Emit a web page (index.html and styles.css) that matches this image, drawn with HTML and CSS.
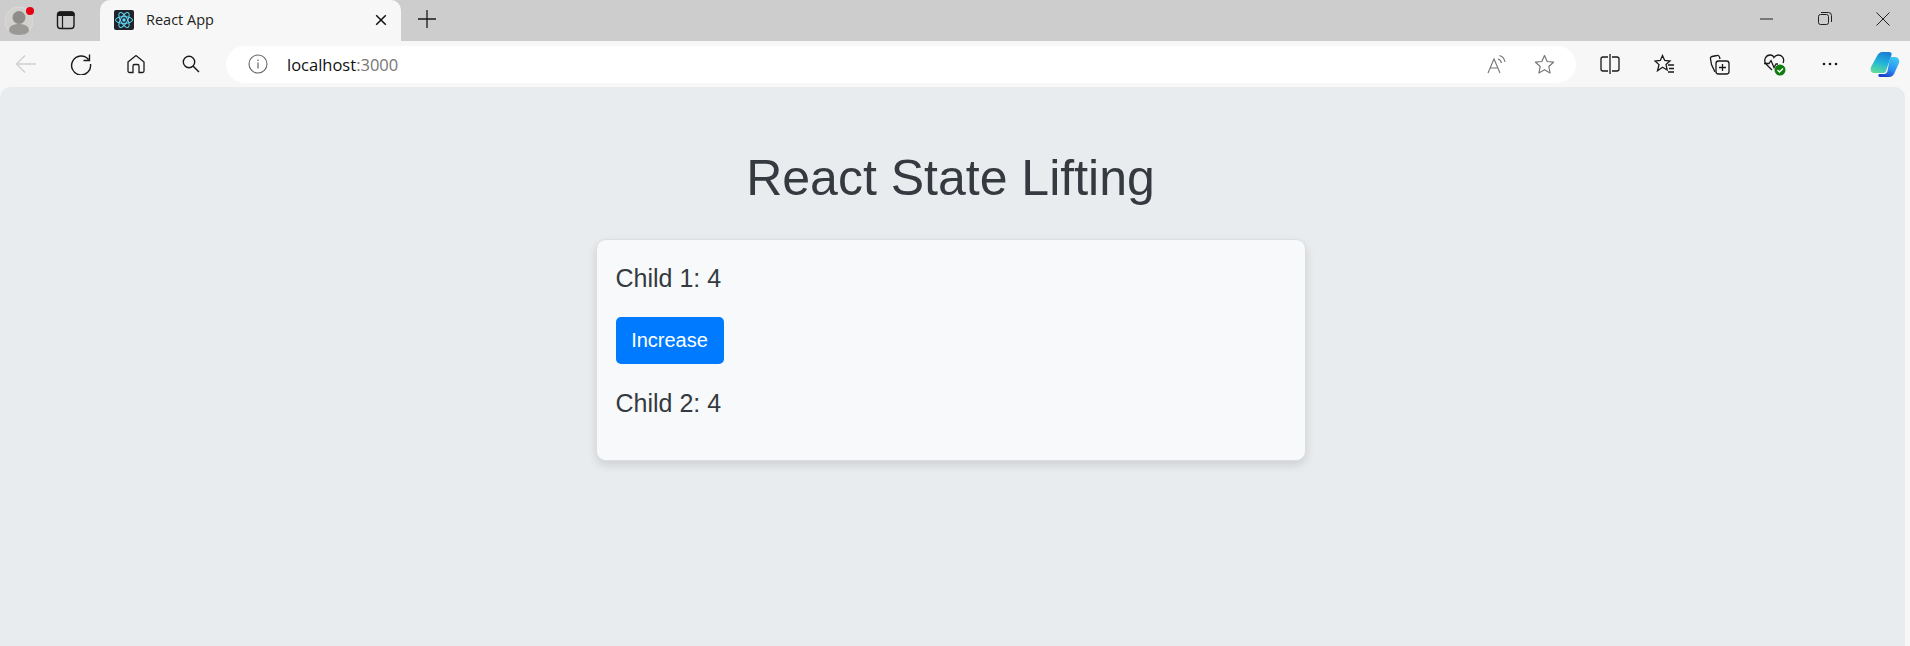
FILE: index.html
```html
<!DOCTYPE html>
<html lang="en">
<head>
  <meta charset="UTF-8">
  <title>React App</title>
  <link rel="stylesheet" href="styles.css">
</head>
<body>
  <div class="tabbar">
    <div class="profile">
      <svg width="34" height="34" viewBox="0 0 34 34">
        <circle cx="19" cy="19" r="14" fill="#d2d1cf" stroke="#dcdbd9"/>
        <circle cx="19" cy="15.5" r="6.5" fill="#8f8d8a"/>
        <path d="M9 29c0-5 4-7 10-7s10 2 10 7c-2 3-6 4-10 4s-8-1-10-4z" fill="#9b9996"/>
        <circle cx="30" cy="9" r="4" fill="#e60012"/>
      </svg>
    </div>
    <div class="tab-toggle">
      <svg width="20" height="20" viewBox="0 0 20 20">
        <rect x="1.5" y="2" width="16.5" height="16.5" rx="3" fill="none" stroke="#1a1a1a" stroke-width="1.4"/>
        <path d="M2 5.5V4a2 2 0 0 1 2-2h12a2 2 0 0 1 2 2v1.5zM6.5 6v12" fill="#1a1a1a" stroke="#1a1a1a" stroke-width="1.2"/>
      </svg>
    </div>
    <div class="tab">
      <svg class="favicon" width="20" height="20" viewBox="0 0 20 20">
        <rect width="20" height="20" rx="2" fill="#20232a"/>
        <g fill="none" stroke="#61dafb" stroke-width="1">
          <ellipse cx="10" cy="10" rx="8.5" ry="3.4"/>
          <ellipse cx="10" cy="10" rx="8.5" ry="3.4" transform="rotate(60 10 10)"/>
          <ellipse cx="10" cy="10" rx="8.5" ry="3.4" transform="rotate(120 10 10)"/>
        </g>
        <circle cx="10" cy="10" r="1.7" fill="#61dafb"/>
      </svg>
      <span class="tab-title">React App</span>
      <svg class="tab-close" width="12" height="12" viewBox="0 0 12 12">
        <path d="M1.2 1.2l9.6 9.6M10.8 1.2l-9.6 9.6" stroke="#111" stroke-width="1.5"/>
      </svg>
    </div>
    <div class="new-tab">
      <svg width="18" height="18" viewBox="0 0 18 18">
        <path d="M9 0v18M0 9h18" stroke="#1a1a1a" stroke-width="1.3"/>
      </svg>
    </div>
    <div class="window-btns">
      <svg width="14" height="14" viewBox="0 0 14 14"><path d="M0 7h13" stroke="#222" stroke-width="1"/></svg>
      <svg width="14" height="14" viewBox="0 0 14 14">
        <rect x="0.5" y="2.5" width="10" height="10" rx="2" fill="none" stroke="#222"/>
        <path d="M3 .5h7.500a3 3 0 0 1 3 3V10" fill="none" stroke="#222"/>
      </svg>
      <svg width="14" height="14" viewBox="0 0 14 14"><path d="M.5.500l13 13M13.500.500l-13 13" stroke="#222" stroke-width="1"/></svg>
    </div>
  </div>

  <div class="toolbar">
    <div class="nav-btns">
      <svg width="22" height="22" viewBox="0 0 22 22">
        <path d="M21 11H1.500M10 2.500L1.500 11l8.500 8.500" fill="none" stroke="#cfcfcf" stroke-width="1.3"/>
      </svg>
      <svg width="22" height="22" viewBox="0 0 22 22">
        <path d="M18.500 6.500A9.500 9.500 0 1 0 20.500 11M19.500 1.500v6h-6" fill="none" stroke="#1a1a1a" stroke-width="1.4"/>
      </svg>
      <svg width="20" height="20" viewBox="0 0 20 20">
        <path d="M2 8l8-6.500L18 8v9a1.500 1.500 0 0 1-1.500 1.500h-3.500V12a1.500 1.500 0 0 0-1.500-1.500h-3A1.500 1.500 0 0 0 7 12v6.500H3.500A1.500 1.500 0 0 1 2 17z" fill="none" stroke="#1a1a1a" stroke-width="1.3"/>
      </svg>
      <svg width="18" height="18" viewBox="0 0 18 18">
        <circle cx="7" cy="7" r="5.700" fill="none" stroke="#1a1a1a" stroke-width="1.4"/>
        <path d="M11 11l6 6" stroke="#1a1a1a" stroke-width="1.5"/>
      </svg>
    </div>
    <div class="address">
      <svg class="info" width="20" height="20" viewBox="0 0 20 20">
        <circle cx="10" cy="10" r="9" fill="none" stroke="#666" stroke-width="1.1"/>
        <path d="M10 8.500v6M10 5.500v1.500" stroke="#666" stroke-width="1.2"/>
      </svg>
      <span class="url">localhost<span class="url-port">:3000</span></span>
      <svg class="read-aloud" width="20" height="20" viewBox="0 0 20 20">
        <path d="M1 19L7 5l6 14M3 14h8" fill="none" stroke="#777" stroke-width="1.1"/>
        <path d="M11 5c2 .5 3 2 3.500 4M12.500 1.500c3 1 5 3.500 5.500 6.500" fill="none" stroke="#777" stroke-width="1.1"/>
      </svg>
      <svg width="21" height="21" viewBox="0 0 21 21">
        <path d="M10.500 1.500l2.700 6 6.300.7-4.700 4.300 1.300 6.500-5.600-3.300-5.600 3.300 1.300-6.500L1.500 8.200l6.300-.7z" fill="none" stroke="#777" stroke-width="1.2" stroke-linejoin="round"/>
      </svg>
    </div>
    <div class="tools">
      <svg width="20" height="20" viewBox="0 0 20 20">
        <path d="M8 3H3a2 2 0 0 0-2 2v10a2 2 0 0 0 2 2h5M12 3h5a2 2 0 0 1 2 2v10a2 2 0 0 1-2 2h-5M10 0v20" fill="none" stroke="#1a1a1a" stroke-width="1.3"/>
      </svg>
      <svg width="21" height="20" viewBox="0 0 21 20">
        <path d="M8.500 1.500l2.200 5 5.300.5-4 3.600 1.200 5.400-4.700-2.800-5 3.600 1.500-6.200L1 7l5.300-.5zM14 11h6M15 14.500h5M14 18h6" fill="none" stroke="#1a1a1a" stroke-width="1.3"/>
      </svg>
      <svg width="21" height="21" viewBox="0 0 21 21">
        <path d="M6 18L2.500 10.500 1.500 5a2 2 0 0 1 1.500-2.500L8 1.500a2 2 0 0 1 2.500 1.500l.5 2" fill="none" stroke="#1a1a1a" stroke-width="1.3"/>
        <rect x="7" y="7" width="13" height="13" rx="2.500" fill="none" stroke="#1a1a1a" stroke-width="1.3"/>
        <path d="M13.500 10v7M10 13.500h7" stroke="#1a1a1a" stroke-width="1.3"/>
      </svg>
      <svg width="23" height="23" viewBox="0 0 23 23">
        <path d="M9 17L3 11C0 7 3 2 7 2c2 0 3.500 1 4 2.500C12 3 13.500 2 15.500 2c3.500 0 6.500 3.500 4.500 8M1 10.500h5l2 -3 3 7 2-3.500h2" fill="none" stroke="#1a1a1a" stroke-width="1.3"/>
        <circle cx="17" cy="17" r="5.500" fill="#107c10"/>
        <path d="M14.500 17l2 2 3.500-3.500" fill="none" stroke="#fff" stroke-width="1.3"/>
      </svg>
      <svg width="16" height="4" viewBox="0 0 16 4">
        <circle cx="2" cy="2" r="1.3" fill="#1a1a1a"/>
        <circle cx="8" cy="2" r="1.3" fill="#1a1a1a"/>
        <circle cx="14" cy="2" r="1.3" fill="#1a1a1a"/>
      </svg>
      <svg width="30" height="27" viewBox="0 0 30 27">
        <defs>
          <linearGradient id="copilot-a" x1="0.6" y1="0" x2="0.3" y2="1">
            <stop offset="0" stop-color="#1a7fd6"/>
            <stop offset="0.5" stop-color="#22b6d8"/>
            <stop offset="1" stop-color="#5fdc9a"/>
          </linearGradient>
          <linearGradient id="copilot-b" x1="0.7" y1="0" x2="0.3" y2="1">
            <stop offset="0" stop-color="#3cc8f4"/>
            <stop offset="0.6" stop-color="#2a8cf0"/>
            <stop offset="1" stop-color="#1b3fc8"/>
          </linearGradient>
        </defs>
        <path d="M12 1h7c2 0 3 1 2.500 3L16 20c-1 2-2 2-4 2H4C1 22 0 19 1 16L7 5c1-2 3-4 5-4z" fill="url(#copilot-a)"/>
        <path d="M20 6h5c3 0 5 3 4 6l-5 11c-1 2-3 3-5 3h-9c-2 0-2-2-1-3h5c2 0 3-1 3.500-3z" fill="url(#copilot-b)"/>
      </svg>
    </div>
  </div>

  <div class="page">
    <h1>React State Lifting</h1>
    <div class="card">
      <p class="child">Child 1: 4</p>
      <button class="btn">Increase</button>
      <p class="child">Child 2: 4</p>
    </div>
  </div>
</body>
</html>
```

FILE: styles.css
```css
html, body {
  height: 100%;
  margin: 0;
}
body {
  display: flex;
  flex-direction: column;
  overflow: hidden;
  background-color: #f7f7f7;
  font-family: "Liberation Sans", Arial, sans-serif;
}
svg {
  display: block;
  flex-shrink: 0;
}

.tabbar {
  height: 41px;
  display: flex;
  align-items: center;
  background-color: #cdcdcd;
}
.profile {
  width: 34px;
  margin-bottom: 4px;
}
.tab-toggle {
  margin-left: 22px;
  margin-top: -2px;
}
.tab {
  align-self: stretch;
  width: 301px;
  margin-left: 24px;
  box-sizing: border-box;
  padding: 0 14px;
  display: flex;
  align-items: center;
  background-color: #f7f7f7;
  border-radius: 10px 10px 0 0;
}
.favicon {
  margin-top: -2px;
}
.tab-title {
  margin-left: 12px;
  flex: 1;
  margin-top: -2px;
  font-family: "Open Sans", sans-serif;
  font-size: 14.5px;
  color: #222;
}
.tab-close {
  margin-top: -1px;
}
.new-tab {
  margin-left: 17px;
  margin-bottom: 3px;
}
.window-btns {
  margin-left: auto;
  margin-right: 20px;
  margin-bottom: 3px;
  display: flex;
  align-items: center;
  gap: 44px;
}

.toolbar {
  height: 46px;
  display: flex;
  align-items: center;
}
.nav-btns {
  display: grid;
  grid-template-columns: repeat(4, 55px);
  justify-items: center;
  align-items: center;
  margin-left: -2px;
  flex-shrink: 0;
}
.address {
  width: 1350px;
  height: 37px;
  margin-left: 8px;
  flex-shrink: 0;
  box-sizing: border-box;
  padding: 0 21px 0 22px;
  display: flex;
  align-items: center;
  background-color: #fff;
  border-radius: 19px;
}
.url {
  margin-left: 19px;
  flex: 1;
  font-family: "Open Sans", sans-serif;
  font-size: 16.5px;
  color: #111;
}
.url-port {
  color: #767676;
}
.read-aloud {
  margin-right: 27px;
}
.tools {
  display: grid;
  grid-template-columns: repeat(6, 55px);
  justify-items: center;
  align-items: center;
  margin-left: 6px;
  flex-shrink: 0;
}

.page {
  flex: 1;
  box-sizing: border-box;
  padding: 0 4px 0 0;
  display: flex;
  flex-direction: column;
  align-items: center;
  background-color: #e9ecef;
  border-radius: 10px 10px 0 0;
  margin-right: 5px;
  color: #343a40;
}
h1 {
  margin: 63px 0 33px;
  font-size: 50px;
  line-height: 56px;
  font-weight: 400;
}
.card {
  width: 710px;
  height: 222px;
  box-sizing: border-box;
  padding: 23px 19px 0;
  background-color: #f8f9fa;
  border: 1px solid #dcdfe2;
  border-radius: 10px;
  box-shadow: 0 4px 10px rgba(0, 0, 0, 0.12);
}
.child {
  margin: 0 0 24px;
  font-size: 25px;
  line-height: 30px;
}
.btn {
  display: block;
  height: 47px;
  width: 108px;
  margin-bottom: 24px;
  padding: 0;
  border: none;
  border-radius: 5px;
  background-color: #007bff;
  color: #fff;
  font-family: inherit;
  font-size: 20px;
}
```
